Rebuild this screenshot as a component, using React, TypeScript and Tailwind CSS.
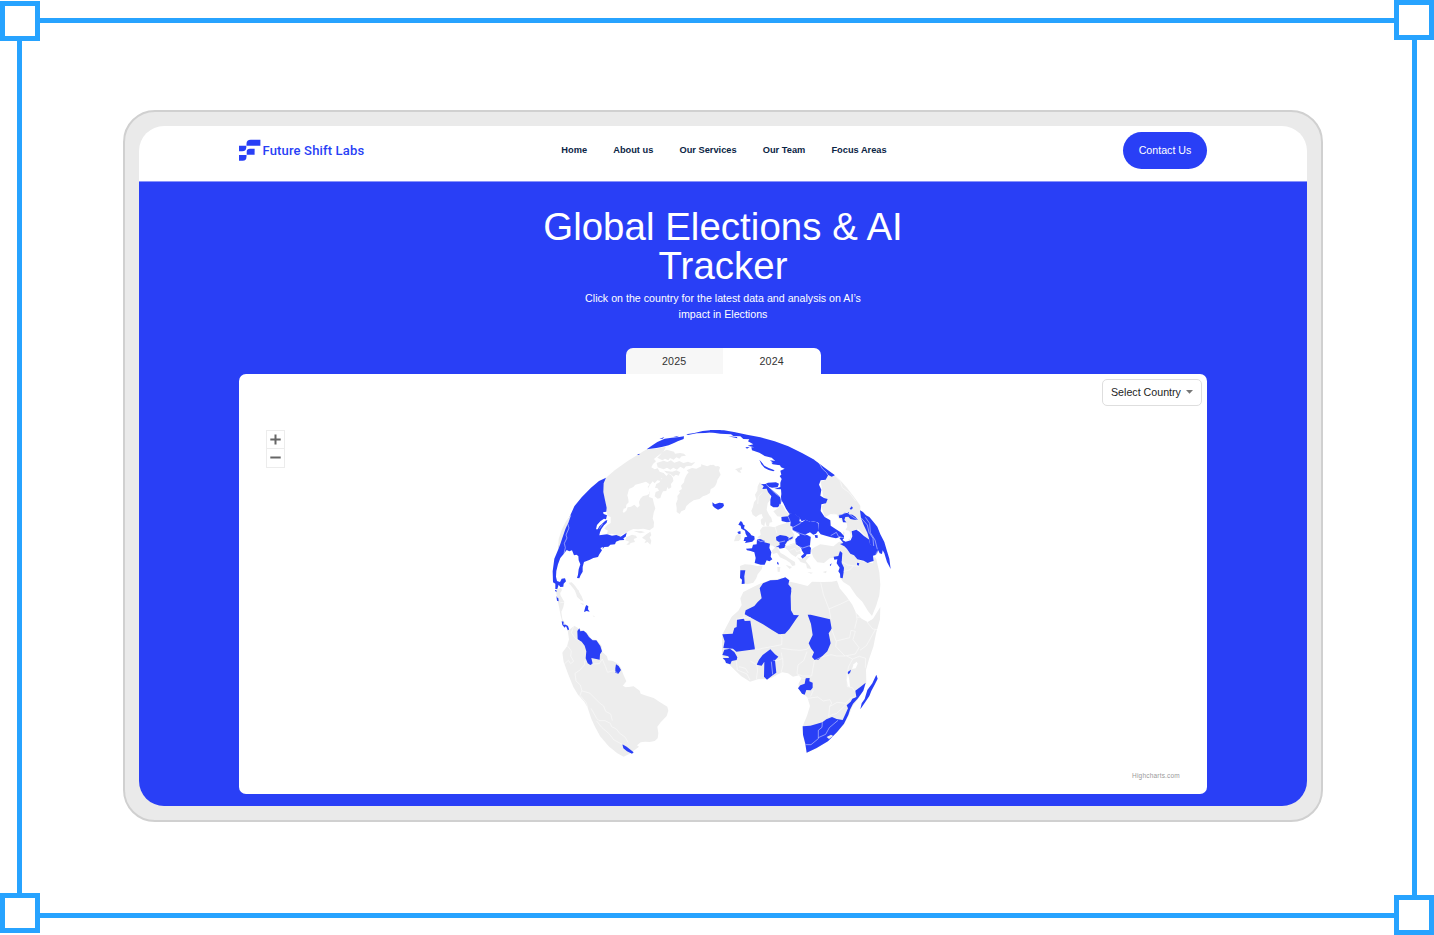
import React from "react";

const BLUE = "#293ff6";
const LAND = "#ededed";

type Shape = { d: string; fill?: string };

/* Each sector of the globe is drawn on its own grid, three units to the pixel. */
const northWest: Shape[] = [
  {
    fill: LAND,
    d: "M198 173L225 150L262 124L292 105L320 88L350 86L378 80L372 92L362 101L350 110L342 117L348 124L339 132L334 142L344 148L353 145L359 155L371 159L381 170L374 179L365 174L362 183L352 181L344 190L338 184L330 194L324 205L329 218L327 231L338 235L342 252L346 265L341 278L338 296L342 306L341 322L329 331L310 326L295 328L280 327L266 333L259 340L248 342L239 350L228 344L214 341L205 345L200 342L204 332L193 326L202 315L212 309L212 291L202 287L199 263L194 238L189 216L190 192Z",
  },
  {
    fill: "#fff",
    d: "M267 207L280 201L286 194L303 190L318 185L329 193L323 201L327 211L328 221L320 226L309 228L301 236L297 246L299 257L292 263L283 254L273 260L263 262L259 272L252 278L248 276L251 266L258 264L259 254L266 247L265 238L262 226Z",
  },
  { fill: LAND, d: "M345 203L349 192L359 187L362 179L371 171L379 168L385 161L393 165L399 174L400 183L393 192L394 202L386 207L382 201L379 213L369 214L365 222L361 234L353 236L344 229L347 216L357 212L353 205Z" },
  { fill: LAND, d: "M366 96L380 89L402 95L405 101L420 99L432 101L438 107L425 109L418 116L409 112L401 119L390 114L385 121L375 116L367 121L352 113L361 104Z" },
  { fill: LAND, d: "M350 129L371 122L382 126L393 121L403 128L418 123L430 129L444 125L454 129L466 126L455 137L438 139L432 146L421 140L411 149L400 143L391 149L381 143L371 148L353 142Z" },
  { fill: LAND, d: "M372 152L397 155L409 151L421 157L416 167L407 164L401 170L391 162L380 160Z" },
  {
    fill: LAND,
    d: "M440 164L446 157L440 151L456 144L469 146L484 139L483 133L502 139L512 134L520 140L534 138L540 142L537 152L542 164L532 180L530 189L525 199L519 204L512 207L510 219L500 225L489 229L478 237L461 241L448 250L439 258L435 269L424 274L419 282L410 276L410 263L408 251L413 238L412 228L420 218L417 213L426 207L423 197L432 187L434 176Z",
  },
  {
    fill: BLUE,
    d: "M198 173L191 190L190 216L195 240L200 263L199 275L189 277L191 282L201 286L198 298L192 296L181 304L171 315L168 328L173 328L178 319L188 310L196 302L202 300L200 308L192 316L184 327L180 337L178 346L201 343L216 347L229 345L242 350L251 344L260 338L257 350L250 355L253 360L239 361L228 365L225 373L211 374L205 380L193 381L187 388L190 381L181 384L186 391L178 403L174 411L160 414L148 420L132 426L128 441L128 455L122 465L118 475L111 474L114 464L116 448L121 433L116 421L115 408L109 404L102 406L96 391L88 394L80 390L71 402L61 414L54 433L49 453L48 470L51 483L60 486L65 476L75 475L78 484L71 491L70 500L61 501L56 494L52 507L46 507L46 491L39 487L38 454L43 416L54 390L61 352L75 319L91 286L103 259L125 232L153 203L177 183Z",
  },
  { fill: BLUE, d: "M320 88L335 77L352 66L374 56L395 53L418 51L432 49L431 57L413 64L402 69L386 76L365 81L349 84Z" },
  { fill: BLUE, d: "M439 43L463 39L488 33L510 31L542 30L542 35L520 37L495 39L470 40L444 45Z M291 104L298 101L298 105Z M358 57L373 51L368 56Z M400 51L418 47L410 51Z" },
  { fill: LAND, d: "M259 352L276 344L288 347L291 353L281 357L285 366L272 369L268 374L259 374L268 365L256 361Z M306 353L320 342L331 335L334 346L329 352L334 362L331 374L323 366L313 370L318 361Z M281 333L303 333L315 337L300 340Z" },
  { fill: LAND, d: "M56 357L65 330L78 304L92 286L84 310L76 328L68 351L61 372L54 390Z M47 509L63 503L66 510L60 520L62 541L54 539Z M86 488L95 487L105 497L114 510L125 529L131 545L121 540L111 523L102 508L94 498Z" },
  { fill: BLUE, d: "M50 528L54 532L55 542L51 540Z" },
];

const northEast: Shape[] = [
  {
    fill: LAND,
    d: "M332 185L345 180L358 164L374 166L390 180L412 205L435 235L451 257L451 273L458 275L470 296L483 320L488 342L485 374L479 373L462 344L445 328L425 334L425 348L419 360L408 361L398 350L400 335L407 331L400 314L395 302L387 297L381 284L362 282L345 292L334 260L345 250L352 238L340 232Z",
  },
  { fill: "#fff", d: "M381 301L390 298L401 306L410 310L412 320L406 330L418 332L422 345L419 357L407 362L400 352L404 340L398 325L393 313Z" },
  {
    fill: BLUE,
    d: "M0 30L42 31L72 36L111 44L151 52L194 64L235 79L276 99L313 119L342 142L375 166L365 170L355 165L347 179L332 181L327 194L334 209L331 227L342 234L353 237L348 250L334 253L332 273L344 291L361 301L362 317L378 328L392 337L402 348L402 357L389 351L378 355L363 352L347 347L332 343L324 332L326 309L313 304L301 306L286 299L275 304L269 294L255 283L238 281L228 266L220 250L212 237L214 222L213 208L193 207L211 201L211 188L215 177L209 168L214 164L211 152L224 146L213 142L210 136L188 133L184 128L198 125L185 113L164 108L148 98L126 91L124 82L133 82L113 77L130 73L114 64L118 58L100 57L91 49L70 48L63 43L31 41L0 37Z",
  },
  { fill: BLUE, d: "M148 119L155 127L163 137L176 144L194 151L190 154L176 150L164 144L154 133Z M160 195L174 188L198 187L207 191L203 202L186 203L171 199Z M55 49L81 51L82 55Z M106 82L119 81L111 86Z" },
  { fill: BLUE, d: "M180 121L198 123L211 128L222 127L231 134L240 139L223 138L209 134L191 130Z" },
  { fill: LAND, d: "M155 191L149 187L143 199L142 212L135 224L139 238L132 247L129 261L124 272L128 284L138 291L147 284L155 282L160 297L166 306L170 319L177 318L179 308L187 306L184 293L177 284L170 270L173 250L182 238L179 217L168 205L160 203Z" },
  { fill: BLUE, d: "M153 192L168 193L180 204L193 215L209 229L215 242L211 256L203 262L190 262L181 256L181 239L184 229L174 216L170 206L157 207L161 199Z" },
  { fill: LAND, d: "M190 274L205 264L209 251L219 257L227 273L240 285L235 293L217 291L202 289Z M152 300L157 294L166 301L163 319L154 313Z M75 148L87 144L95 141L97 148L90 151L94 159L85 157L80 151Z" },
  { fill: LAND, d: "M0 136L10 134L17 139L17 150L24 158L22 170L18 184L10 190L0 200Z" },
  { fill: LAND, d: "M142 352L152 345L150 331L158 320L177 319L193 322L206 316L218 312L237 307L247 316L244 331L252 342L254 353L245 361L232 366L225 383L211 384L198 386L189 377L177 376L159 369Z" },
  { fill: BLUE, d: "M214 291L234 289L240 281L256 282L270 294L268 304L278 306L286 299L302 306L316 304L325 311L324 333L318 341L310 344L300 337L288 343L290 354L301 350L300 365L296 376L303 384L301 402L290 403L286 410L277 416L273 409L282 401L275 391L273 380L257 373L256 357L263 350L272 349L267 341L248 331L247 321L240 317L241 306L230 307L215 303Z" },
  { fill: BLUE, d: "M262 350L276 342L290 344L302 350L300 378L274 385L257 373Z" },
  { fill: BLUE, d: "M198 351L210 345L229 348L238 354L248 349L248 355L232 364L226 373L225 383L209 386L205 380L196 382L209 375L208 367L199 361Z M314 345L323 346L323 354L316 353Z" },
  { fill: BLUE, d: "M141 358L151 357L164 362L163 367L180 371L178 384L184 397L182 410L187 418L178 424L170 421L164 434L152 434L134 429L137 414L133 397L122 393L111 391L108 386L126 385L129 374L140 373Z M202 425L206 429L205 436L201 430Z" },
  { fill: BLUE, d: "M85 314L91 304L96 305L100 314L104 316L102 325L109 330L120 340L124 346L133 349L134 358L127 365L105 369L108 363L101 363L104 352L112 350L107 342L105 332L94 326L92 317Z M82 336L91 333L92 341L86 342Z" },
  { fill: LAND, d: "M77 348L84 341L92 344L92 357L86 363L72 364L75 355Z M90 438L104 433L124 434L141 438L158 437L155 448L143 463L139 475L130 488L111 493L101 489L104 471L104 452L91 452Z" },
  { fill: BLUE, d: "M91 451L106 451L103 469L104 491L95 492L96 479L90 474Z" },
  { fill: LAND, d: "M185 392L196 382L205 387L212 399L222 404L240 417L255 426L256 436L247 438L240 428L228 420L210 412L201 398L189 402Z M222 381L242 373L253 369L269 381L273 401L264 403L257 411L243 402L234 391Z M261 412L276 417L288 408L302 407L294 415L287 423L299 437L304 447L291 445L288 431L272 426Z M202 441L211 441L209 456L203 455Z M227 434L246 441L239 447Z" },
  { fill: LAND, d: "M302 390L315 381L331 373L351 376L370 379L387 365L398 366L406 385L425 401L440 412L453 423L471 426L488 430L491 421L494 410L499 417L503 436L508 457L511 494L508 526L499 556L486 588L474 573L457 545L439 527L419 498L400 486L388 470L399 460L402 446L390 423L382 412L359 415L342 429L322 427L310 412Z M292 456L309 458L303 461Z M338 456L350 452L348 460Z" },
  { fill: BLUE, d: "M386 285L397 283L404 278L412 279L416 276L418 283L427 284L436 290L444 300L432 299L421 297L415 290L406 291L403 300L409 307L399 307L396 294L388 294Z M419 266L425 259L429 264L423 269Z" },
  { fill: BLUE, d: "M388 354L400 351L398 361L407 365L422 361L427 349L425 334L439 329L448 335L462 348L478 359L480 371L492 381L499 391L497 405L489 407L491 423L482 425L473 429L461 422L442 418L432 406L421 401L411 387L403 379L390 372L400 369Z M441 428L448 430L446 437L441 435Z" },
  { fill: BLUE, d: "M450 271L459 276L468 286L478 291L490 305L502 320L511 343L523 366L530 390L538 416L542 447L531 426L523 400L518 391L516 402L509 400L504 390L500 404L498 392L480 371L477 355L472 338L461 315L453 294Z" },
  { fill: BLUE, d: "M390 393L397 399L396 413L395 429L402 443L401 456L398 475L391 473L390 461L385 454L389 443L380 430L382 418L373 419L371 410L385 408Z M359 435L365 430L362 438Z" },
  { fill: BLUE, d: "M7 247L15 253L28 248L40 250L42 257L36 264L24 269L14 263L8 257Z" },
];

const southWest: Shape[] = [
  { fill: LAND, d: "M48 0L60 1L61 15L73 36L70 52L64 65L67 87L76 101L84 108L74 109L68 100L62 77L57 50L52 28Z M105 0L116 0L117 20L126 29L118 27L111 20Z M120 38L133 42L128 46Z M158 76L166 80L161 80Z" },
  { fill: BLUE, d: "M45 0L49 0L50 6L46 4Z M50 22L55 25L56 34L51 32Z M65 94L71 95L70 104L77 104L84 108L87 117L86 127L82 118L78 108L74 113L67 105Z M139 45L145 49L144 58L149 65L140 63L132 66L136 51Z" },
  {
    fill: LAND,
    d: "M83 121L90 118L103 107L117 116L139 127L155 148L170 150L185 168L187 186L201 199L204 211L219 213L235 222L243 234L249 251L259 274L248 288L265 291L281 289L299 302L302 311L319 317L341 324L359 336L382 350L385 362L380 378L362 397L352 410L355 430L353 445L344 453L329 456L315 455L302 457L291 466L297 470L281 482L266 493L251 500L232 490L206 469L180 438L165 410L154 386L143 353L133 335L114 314L100 291L84 251L71 216L67 188L81 169L87 148Z",
  },
  { fill: "#fff", d: "M250 287L257 282L269 284L268 290L257 292Z" },
  { fill: BLUE, d: "M118 115L121 124L131 122L139 129L147 141L158 151L169 151L181 168L186 184L180 193L179 209L165 206L154 204L158 221L151 225L143 220L137 205L139 184L134 167L125 155L113 148L112 123Z M228 223L236 228L243 240L235 251L226 248L226 235Z M247 463L260 470L281 487L276 491L261 484L250 475Z" },
];

const southEast: Shape[] = [
  {
    fill: LAND,
    d: "M36 136L49 110L65 80L85 62L95 45L91 25L100 6L122 -5L148 -18L181 -30L217 -35L240 -25L258 -21L293 -12L306 -25L339 -24L365 -25L381 -28L389 -5L409 19L427 44L438 68L455 86L473 96L489 86L511 51L510 88L499 127L490 170L477 208L468 240L469 278L462 297L445 326L428 348L419 370L401 405L378 430L350 455L320 475L290 488L285 461L279 436L278 409L291 377L300 348L292 322L275 308L266 294L266 280L274 266L267 256L249 260L234 250L217 247L201 254L184 264L164 267L144 268L120 275L94 259L74 240L57 223L39 208L36 187Z",
  },
  { fill: "#fff", d: "M431 223L440 215L443 221L437 235L426 237Z" },
  { fill: "#fff", d: "M414 252L418 270L420 291L414 289L410 269Z" },
  { fill: BLUE, d: "M149 -5L159 -20L181 -29L202 -30L217 -35L233 -29L231 -15L244 2L242 18L243 61L251 75L267 76L260 85L238 117L225 131L207 133L186 120L159 103L123 83L104 73L107 61L133 48L143 36L155 25Z M218 -35L226 -38L238 -29L235 -17L244 -6L243 9L238 22L231 0L218 -14Z" },
  { fill: BLUE, d: "M81 89L102 86L104 93L121 92L135 178L79 185L69 176L40 174L44 154L37 133L68 131L73 114L80 111Z M43 179L60 176L73 186L82 202L80 210L65 213L61 223L48 219L45 211L38 204L57 204L55 199L37 195Z" },
  { fill: BLUE, d: "M181 178L195 193L205 200L195 211L199 248L188 256L171 269L162 260L163 215L155 227L140 224L147 209L158 195Z M293 74L302 74L360 88L365 116L356 130L362 160L352 184L338 197L325 209L314 210L306 201L312 187L303 175L296 160L308 135L303 102Z" },
  { fill: BLUE, d: "M287 265L299 264L298 274L308 278L308 293L302 301L289 300L284 314L276 311L270 302L264 295L271 286L284 281Z M413 246L423 239L420 249L414 253Z" },
  { fill: BLUE, d: "M278 409L301 407L337 397L349 388L366 381L380 387L398 390L406 373L414 355L410 346L422 335L427 326L439 321L436 302L452 290L467 278L460 302L444 325L429 341L420 359L415 375L402 401L382 425L354 454L320 474L290 488L286 461L279 434Z M499 254L503 266L494 284L484 303L478 318L466 336L451 358L455 340L464 327L472 300L487 280Z" },
  { fill: LAND, d: "M350 441L363 434L370 438L357 447Z" },
];

const borders = {
  northWest: "M92 286L83 311L87 324L78 345L81 354L73 370L76 383L72 401 M188 312L178 326",
  northEast:
    "M313 119L326 127L337 146L350 158L354 166 M168 193L180 204L194 219L212 232L214 255 M157 217L145 230L143 252 M234 289L241 306L240 317L249 322 M276 303L271 310L249 322 M248 331L272 341L285 345L298 340L301 351 M258 377L278 384L302 376 M248 349L236 354L239 364 M141 358L152 365L163 362 M374 166L390 182L397 203L418 218L437 243 M370 282L387 286L411 277L429 291L444 301 M362 347L379 337L385 349L402 354 M453 293L472 315L477 337L489 355L491 378 M466 292L479 310L481 338L495 360L502 388 M207 367L225 363 M225 373L240 377L259 369 M239 391L255 385L260 395L275 389 M395 425L413 435L446 439 M401 454L419 450L430 438 M200 309L196 323L201 340",
  southWest:
    "M82 167L94 183L92 198L101 214L92 221L85 211L73 222 M102 107L94 128L104 143L118 153 M135 211L133 225L119 241L105 250L108 273L121 285L126 303L149 309L166 326L181 341L191 348L197 364L212 372L217 392 M155 222L178 221L187 207L196 229L203 247L219 242L232 248 M125 303L120 316L138 337L143 353 M153 355L170 385L177 392L195 392L211 400L215 410L229 417L239 430L255 441L264 457 M170 393L185 412L209 433L221 449L248 464 M61 38L73 37",
  southEast:
    "M78 88L101 83L123 83 M102 69L102 88 M134 177L146 178L157 175L190 169L215 164L216 141L207 133 M214 175L244 179L270 181L290 178L300 170 M79 212L82 240L111 252L120 270 M87 230L106 235L115 249 M140 224L143 240L139 268 M121 213L140 224 M184 215L188 253 M190 211L199 212L217 206L214 188 M218 205L219 225L213 249 M291 185L281 212L264 225L261 252L278 258L305 258L313 212 M270 263L287 266 M314 211L335 201L363 194L380 198L405 198 M363 87L357 57L340 13L332 -23 M357 57L390 43L423 27 M364 116L379 155L377 169L405 198L436 192L447 173L429 149L436 124L423 121L419 143L379 153 M438 67L441 88L434 116 M440 82L460 81L486 89 M471 96L488 117L502 119 M450 181L469 167L496 119 M410 198L428 207L416 229L411 253L412 290L427 293L434 304 M428 207L448 199L467 205L466 233 M294 325L323 321L340 333L360 329L365 340L359 349L356 381 M310 300L302 319 M359 350L381 337L408 340L422 324L434 322 M337 397L336 412L325 421L325 446L303 464L287 464 M325 443L347 433L358 413L384 391 M359 377L380 370L407 345",
};

function Globe() {
  const sectors = [
    { at: "translate(540 420) scale(.33333)", shapes: northWest, lines: borders.northWest },
    { at: "translate(540 590) scale(.33333)", shapes: southWest, lines: borders.southWest },
    { at: "translate(710 590) scale(.33333)", shapes: southEast, lines: borders.southEast },
    { at: "translate(710 420) scale(.33333)", shapes: northEast, lines: borders.northEast },
  ];
  return (
    <svg className="mr-[6px] h-[350px] w-[360px]" viewBox="540 420 360 350" role="img" aria-label="World map">
      {sectors.map((s) => (
        <g key={s.at} transform={s.at}>
          {s.shapes.map((p) => (
            <path key={p.d} d={p.d} fill={p.fill} />
          ))}
          <path d={s.lines} fill="none" stroke="#fff" strokeOpacity=".7" strokeWidth="2" strokeLinejoin="round" />
        </g>
      ))}
    </svg>
  );
}

function Logo() {
  return (
    <div className="flex items-center">
      <svg className="h-[22px] w-[22px]" viewBox="0 0 22 22" fill={BLUE}>
        <path d="M7.5 6.7V5Q7.5 0.8 11.7 0.8H21.4V6.7Z" />
        <path d="M0 6.8H7.3V8.2Q7.3 12.3 3.2 12.3H0Z" />
        <path d="M7.7 15.8V13Q7.7 9.8 11 9.8H15.6V15.8Z" />
        <path d="M0 16H7.5V17.8Q7.5 21.8 3.7 21.8H0Z" />
      </svg>
      <span className="mt-px ml-[1.5px] font-['Roboto',sans-serif] text-[13px] leading-[16px] font-medium tracking-[0.16px] whitespace-nowrap text-[#293ff6]">
        Future Shift Labs
      </span>
    </div>
  );
}

function Header() {
  return (
    <header className="grid h-[55px] grid-cols-[1fr_auto_1fr] items-start rounded-t-[25px] bg-white px-[100px]">
      <div className="pt-[13px]"><Logo /></div>
      <nav className="flex gap-[26.2px] pt-[18px] pl-[2px] text-[9.25px] leading-3 font-bold whitespace-nowrap text-[#0b2545]">
        <a>Home</a>
        <a>About us</a>
        <a>Our Services</a>
        <a>Our Team</a>
        <a>Focus Areas</a>
      </nav>
      <button className="mt-[6px] h-[37px] w-[84px] justify-self-end rounded-full bg-[#293ff6] pb-[2px] text-[10.67px] whitespace-nowrap text-white">
        Contact Us
      </button>
    </header>
  );
}

function MapCard() {
  return (
    <section className="relative h-[420.5px] w-[968px] rounded-[7px] bg-white">
      <div className="flex justify-center pt-[46.5px]">
        <Globe />
      </div>
      <div className="absolute top-[56.5px] left-[27px] flex h-[37.5px] w-[19px] flex-col border border-[#ececec] bg-white">
        <button className="flex h-[18px] items-center justify-center border-b border-[#ececec]" aria-label="Zoom in">
          <svg className="h-[11px] w-[11px]" viewBox="0 0 11 11" stroke="#666" strokeWidth="2">
            <path d="M.3 5.5H10.7M5.5 .5V10.5" />
          </svg>
        </button>
        <button className="flex h-[17px] items-center justify-center" aria-label="Zoom out">
          <svg className="h-[11px] w-[11px]" viewBox="0 0 11 11" stroke="#666" strokeWidth="2">
            <path d="M.3 5.5H10.7" />
          </svg>
        </button>
      </div>
      <button className="absolute top-[5px] right-[5px] flex h-[27px] w-[100px] items-center rounded-[5px] border border-[#dedede] bg-white pb-px pl-[8px] text-[10.67px] whitespace-nowrap text-[#242424]">
        Select Country
        <svg className="ml-[5px] h-1 w-[7px]" viewBox="0 0 7 4" fill="#777">
          <path d="M0 0H7L3.5 3.7Z" />
        </svg>
      </button>
      <span className="absolute right-[27px] bottom-[14px] text-[6.5px] leading-2 tracking-[0.2px] text-[#999]">Highcharts.com</span>
    </section>
  );
}

function Handle({ place }: { place: string }) {
  return <span className={`absolute size-10 border-[5px] border-[#27a3ff] bg-white ${place}`} />;
}

export default function App() {
  return (
    <main className="relative h-[935px] w-[1434px] overflow-hidden bg-white pt-[18px] pl-[17px] font-['Liberation_Sans',Arial,sans-serif]">
      <div className="h-[900px] w-[1400px] border-[5px] border-[#27a3ff] pt-[87px] pl-[101px]">
        <div className="h-[712px] w-[1200px] rounded-[32px] border-2 border-[#d0d0d0] bg-[#eaeaea] p-[14px]">
          <Header />
          <div className="flex h-[625px] flex-col items-center rounded-b-[25px] border-t border-[#8994fa] bg-[#293ff6] pt-[24.5px] text-white">
            <h1 className="w-[400px] text-center text-[38.4px] leading-[39px] tracking-[0.05px]">
              Global Elections &amp; AI Tracker
            </h1>
            <p className="mt-[5px] w-[290px] text-center text-[10.67px] leading-4">
              Click on the country for the latest data and analysis on AI’s impact in Elections
            </p>
            <div className="mt-[26.5px] flex h-[25.5px] w-[195px] overflow-hidden rounded-t-[7px] text-[10.67px] tracking-[0.2px] text-[#333]">
              <button className="flex-1 bg-[#f7f7f7]">2025</button>
              <button className="flex-1 bg-white">2024</button>
            </div>
            <MapCard />
          </div>
        </div>
      </div>
      <Handle place="top-px left-0" />
      <Handle place="top-0 right-0" />
      <Handle place="top-[893px] left-0" />
      <Handle place="right-0 bottom-0" />
    </main>
  );
}
